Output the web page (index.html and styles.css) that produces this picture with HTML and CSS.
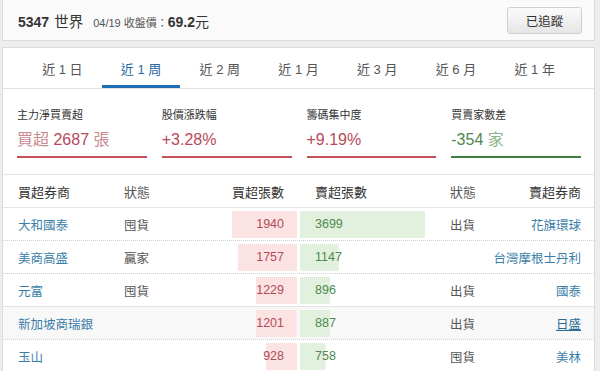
FILE: index.html
```html
<!DOCTYPE html>
<html lang="zh-Hant">
<head>
<meta charset="utf-8">
<link rel="stylesheet" href="styles.css">
</head>
<body>
<div class="page">
  <header class="card top">
    <div class="title">
      <span class="code">5347</span>
      <span class="name">世界</span>
      <span class="date">04/19 收盤價：</span>
      <span class="price">69.2</span><span class="unit">元</span>
    </div>
    <button class="follow">已追蹤</button>
  </header>

  <section class="card main">
    <nav class="tabs">
      <a class="tab">近 1 日</a>
      <a class="tab active">近 1 周</a>
      <a class="tab">近 2 周</a>
      <a class="tab">近 1 月</a>
      <a class="tab">近 3 月</a>
      <a class="tab">近 6 月</a>
      <a class="tab">近 1 年</a>
    </nav>

    <div class="stats">
      <div class="stat red">
        <div class="label">主力淨買賣超</div>
        <div class="value"><span class="soft">買超</span> 2687 <span class="soft">張</span></div>
      </div>
      <div class="stat red">
        <div class="label">股價漲跌幅</div>
        <div class="value">+3.28%</div>
      </div>
      <div class="stat red">
        <div class="label">籌碼集中度</div>
        <div class="value">+9.19%</div>
      </div>
      <div class="stat green">
        <div class="label">買賣家數差</div>
        <div class="value">-354 <span class="soft">家</span></div>
      </div>
    </div>

    <div class="table">
      <div class="row head">
        <div class="c-name">買超券商</div>
        <div class="c-st">狀態</div>
        <div class="c-buy">買超張數</div>
        <div class="c-sell">賣超張數</div>
        <div class="c-st2">狀態</div>
        <div class="c-name2">賣超券商</div>
      </div>
      <div class="row">
        <div class="c-name"><a>大和國泰</a></div>
        <div class="c-st">囤貨</div>
        <div class="c-buy bar" style="background-size: 65.5px calc(100% - 5px)">1940</div>
        <div class="c-sell bar" style="background-size: 125px calc(100% - 5px)">3699</div>
        <div class="c-st2">出貨</div>
        <div class="c-name2"><a>花旗環球</a></div>
      </div>
      <div class="row">
        <div class="c-name"><a>美商高盛</a></div>
        <div class="c-st">贏家</div>
        <div class="c-buy bar" style="background-size: 59.4px calc(100% - 5px)">1757</div>
        <div class="c-sell bar" style="background-size: 38.8px calc(100% - 5px)">1147</div>
        <div class="c-st2"></div>
        <div class="c-name2"><a>台灣摩根士丹利</a></div>
      </div>
      <div class="row">
        <div class="c-name"><a>元富</a></div>
        <div class="c-st">囤貨</div>
        <div class="c-buy bar" style="background-size: 41.5px calc(100% - 5px)">1229</div>
        <div class="c-sell bar" style="background-size: 30.3px calc(100% - 5px)">896</div>
        <div class="c-st2">出貨</div>
        <div class="c-name2"><a>國泰</a></div>
      </div>
      <div class="row hover">
        <div class="c-name"><a>新加坡商瑞銀</a></div>
        <div class="c-st"></div>
        <div class="c-buy bar" style="background-size: 40.6px calc(100% - 5px)">1201</div>
        <div class="c-sell bar" style="background-size: 30px calc(100% - 5px)">887</div>
        <div class="c-st2">出貨</div>
        <div class="c-name2"><a class="u">日盛</a></div>
      </div>
      <div class="row">
        <div class="c-name"><a>玉山</a></div>
        <div class="c-st"></div>
        <div class="c-buy bar" style="background-size: 31.4px calc(100% - 5px)">928</div>
        <div class="c-sell bar" style="background-size: 25.6px calc(100% - 5px)">758</div>
        <div class="c-st2">囤貨</div>
        <div class="c-name2"><a>美林</a></div>
      </div>
    </div>
  </section>
</div>
</body>
</html>
```

FILE: styles.css
```css
* { box-sizing: border-box; }
html, body { margin: 0; padding: 0; }
body {
  background: #ededed;
  font-family: "Liberation Sans", "Noto Sans CJK TC", sans-serif;
  color: #333;
  overflow: hidden;
}
.page {
  padding: 0 5px 0 2px;
}
.card {
  background: #fff;
  border: 1px solid #dcdcdc;
}
.top {
  background: #fafafa;
  border-top: none;
  height: 41px;
  display: flex;
  align-items: center;
  justify-content: space-between;
  padding: 0 12px 0 15px;
}
.title {
  display: flex;
  align-items: baseline;
  white-space: pre;
}
.code { font-weight: bold; font-size: 14px; }
.name { font-size: 14.5px; margin-left: 5px; }
.date { font-size: 11px; color: #555; margin-left: 10px; }
.price { font-weight: bold; font-size: 14px; }
.unit { font-size: 14px; }
.follow {
  width: 75px;
  height: 27px;
  margin-top: 1px;
  font-family: inherit;
  font-size: 12.5px;
  color: #333;
  background: linear-gradient(#fbfbfb, #e6e6e6);
  border: 1px solid #cfcfcf;
  border-radius: 3px;
}
.main {
  margin-top: 6px;
}
.tabs {
  display: flex;
  padding: 0 20px;
  height: 41px;
  border-bottom: 1px solid #e2e2e2;
}
.tab {
  flex: 1;
  text-align: center;
  font-size: 13px;
  color: #555;
  padding-top: 14px;
  line-height: 16px;
  border-bottom: 3px solid transparent;
  white-space: pre;
}
.tab.active {
  color: #2a6aa0;
  border-bottom-color: #1f6db2;
}
.stats {
  display: grid;
  grid-template-columns: repeat(4, 1fr);
  column-gap: 15px;
  padding: 18px 13px 16px 14px;
  border-bottom: 1px solid #e6e6e6;
}
.label {
  font-size: 11px;
  line-height: 16px;
  color: #333;
}
.value {
  margin-top: 6px;
  font-size: 16px;
  line-height: 22px;
  padding-bottom: 5px;
  border-bottom: 2px solid;
  white-space: pre;
}
.red .value { color: #b54a58; border-bottom-color: #c4505c; }
.red .soft { color: #c98a90; }
.green .value { color: #4c8a4c; border-bottom-color: #3f7f3f; }
.green .soft { color: #8cb48c; }

.table { font-size: 12.5px; }
.row {
  display: grid;
  grid-template-columns: 121px 100px 73px 149px 34px 1fr;
  height: 33px;
  align-items: stretch;
  border-top: 1px dotted #cfcfcf;
}
.row > div {
  display: flex;
  align-items: center;
  white-space: nowrap;
}
.row.head {
  border-top: none;
  border-bottom: 1px solid #e6e6e6;
  height: 33px;
  font-size: 13px;
  color: #333;
}
.row.head + .row { border-top: none; height: 32px; }
.row.hover { background: #f8f8f8; }
.c-name { padding-left: 15px; }
.c-st { color: #555; }
.c-buy { justify-content: flex-end; padding-right: 13px; }
.c-sell { margin-left: 3px; padding-left: 15px; }
.c-st2 { color: #555; padding-left: 4px; }
.c-name2 { justify-content: flex-end; padding-right: 13px; }
.row:not(.head) .c-buy { color: #b04c5a; }
.row:not(.head) .c-sell { color: #4e8a4e; }
.bar { background-repeat: no-repeat; }
.c-buy.bar {
  background-image: linear-gradient(#fce3e3, #fce3e3);
  background-position: right center;
}
.c-sell.bar {
  background-image: linear-gradient(#e2f1de, #e2f1de);
  background-position: left center;
}
a { color: #3a7ea8; text-decoration: none; }
a.u { text-decoration: underline; color: #2a6a96; }
```
